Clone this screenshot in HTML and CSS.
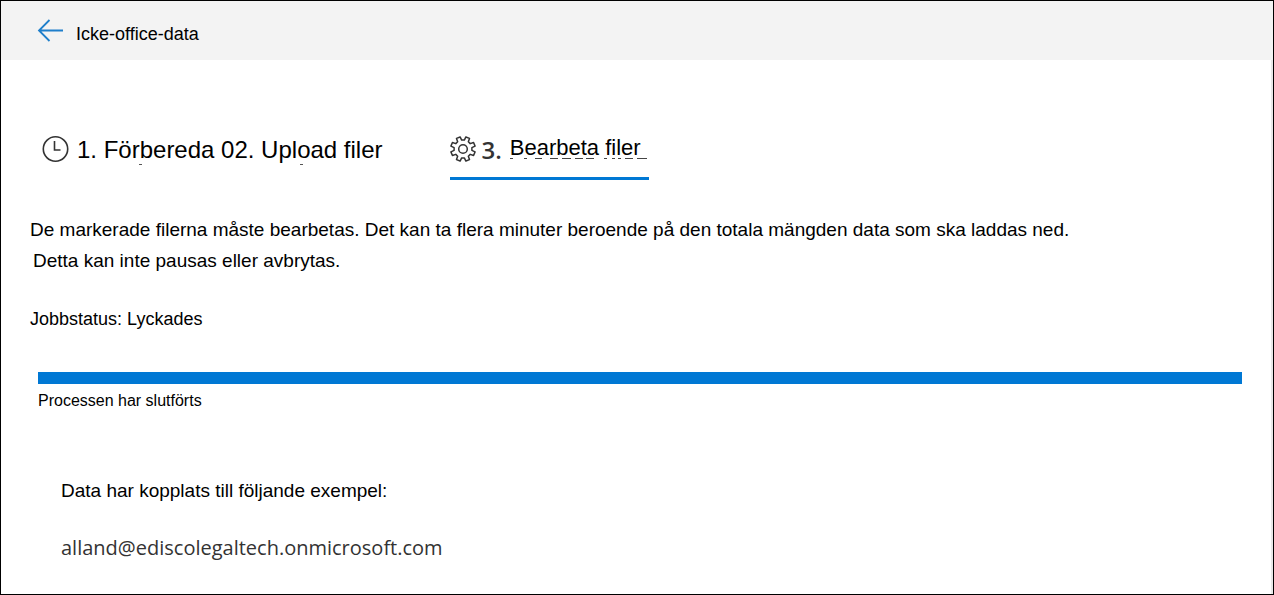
FILE: index.html
```html
<!DOCTYPE html>
<html lang="sv">
<head>
<meta charset="utf-8">
<meta name="viewport" content="width=device-width, initial-scale=1">
<title>Icke-office-data</title>
<link rel="stylesheet" href="styles.css">
</head>
<body>
<div class="page">
  <header class="header">
    <button class="back" type="button" aria-label="Tillbaka">
      <svg width="26" height="24" viewBox="0 0 26 24" fill="none" stroke="#1f7fcb" stroke-width="1.800"><path d="M26 11.500H2M12.500 1L2 11.500l10.500 10.500"/></svg>
    </button>
    <h1 class="title">Icke-office-data</h1>
  </header>
  <main class="main">
    <nav class="steps">
      <button class="step" type="button">
        <svg class="icon" width="28" height="28" viewBox="0 0 28 28" fill="none" stroke="#333" stroke-width="1.600"><circle cx="14.500" cy="13" r="12.200"/><path d="M13.500 5v9h6"/></svg>
        <span class="step-label">1. Förbereda 02. Upload filer
          <svg class="specks" width="300" height="2" viewBox="0 0 300 2" fill="#555"><path d="M62 0h3v1h-3zM223 0h3v1h-3z"/></svg>
        </span>
      </button>
      <button class="step step-active" type="button" aria-current="step">
        <svg class="icon" width="26" height="28" viewBox="-13 -13 26 28" fill="none" stroke="#333" stroke-width="1.500" stroke-linejoin="round"><path id="gear" d=""/><circle r="4.300"/></svg>
        <span class="step-number">3.</span>
        <span class="step-name">Bearbeta filer
          <svg class="dashes" width="138" height="2" viewBox="0 0 138 2" fill="#444"><path d="M0 0h3v1h-3zM14 0h3v1h-3zM25 0h7v1h-7zM40 0h8v1h-8zM52 0h9v1h-9zM65 0h8v1h-8zM76 0h8v1h-8zM94 0h3v1h-3zM102 0h3v1h-3zM108 0h3v1h-3zM115 0h8v1h-8zM127 0h10v1h-10z"/></svg>
        </span>
      </button>
    </nav>
    <section class="intro">
      <p class="text">De markerade filerna måste bearbetas. Det kan ta flera minuter beroende på den totala mängden data som ska laddas ned.</p>
      <p class="text text-next">Detta kan inte pausas eller avbrytas.</p>
    </section>
    <p class="status">Jobbstatus: Lyckades</p>
    <section class="progress">
      <div class="bar" role="progressbar" aria-label="Bearbetning" aria-valuenow="100" aria-valuemin="0" aria-valuemax="100"></div>
      <p class="progress-text">Processen har slutförts</p>
    </section>
    <section class="result">
      <p class="text">Data har kopplats till följande exempel:</p>
      <p class="account">alland@ediscolegaltech.onmicrosoft.com</p>
    </section>
  </main>
</div>
<script src="gear.js"></script>
</body>
</html>
```

FILE: gear.js
```js
// Outline of an eight-toothed gear, centred on the origin.
const polar = (radius, degrees) => {
  const a = (degrees * Math.PI) / 180;
  return (radius * Math.cos(a)).toFixed(2) + " " + (radius * Math.sin(a)).toFixed(2);
};
const points = [];
for (let i = 0; i < 8; i++) {
  const c = i * 45 + 22.5;
  points.push(polar(9, c - 14), polar(12.4, c - 9), polar(12.4, c + 9), polar(9, c + 14));
}
document.getElementById("gear").setAttribute("d", "M" + points.join("L") + "Z");
```

FILE: styles.css
```css
* {
  box-sizing: border-box;
}

body {
  margin: 0;
  background: #fff;
  color: #000;
  font-family: "Liberation Sans", Arial, sans-serif;
}

h1,
p {
  margin: 0;
  font-weight: 400;
}

button {
  padding: 0;
  border: 0;
  background: none;
  color: inherit;
  font: inherit;
}

svg {
  display: block;
}

.page {
  display: flex;
  flex-direction: column;
  min-height: 100vh;
  border: 1px solid #000;
}

.header {
  display: flex;
  align-items: center;
  gap: 13px;
  height: 59px;
  padding-left: 36px;
  background: #f3f3f3;
}

.title {
  padding-top: 6px;
  font-size: 18px;
  line-height: 24px;
}

.main {
  flex: 1;
  padding: 72px 29px 24px;
  border-right: 2px solid #e8e8e8;
}

.steps {
  display: flex;
  align-items: flex-start;
  gap: 67px;
  padding-left: 11px;
}

.step {
  display: flex;
  align-items: center;
  height: 48px;
  padding-bottom: 12px;
  gap: 8px;
  font-size: 24px;
  line-height: 32px;
  text-align: left;
  white-space: nowrap;
}

.step-active {
  gap: 6px;
  border-bottom: 3px solid #0078d4;
  padding-bottom: 9px;
}

.step-label,
.step-name {
  position: relative;
}

.specks {
  position: absolute;
  left: 0;
  top: 30px;
}

.step-number {
  color: #333;
  font-family: "Open Sans", "Noto Sans", sans-serif;
  font-weight: 600;
}

.step-name {
  width: 141px;
  font-size: 22px;
  padding: 0 0 4px 2px;
}

.dashes {
  position: absolute;
  left: 2px;
  top: 26px;
}

.intro {
  margin-top: 34px;
}

.text {
  font-size: 19px;
  line-height: 31px;
}

.text-next {
  padding-left: 3px;
}

.status {
  margin-top: 31px;
  font-size: 18px;
  line-height: 24px;
}

.progress {
  margin-top: 41px;
  padding-left: 8px;
}

.bar {
  height: 12px;
  background: #0078d4;
}

.progress-text {
  margin-top: 5px;
  font-size: 16px;
  line-height: 24px;
}

.result {
  margin-top: 62px;
  padding-left: 31px;
}

.account {
  margin-top: 26px;
  color: #333;
  font-family: "Open Sans", "Noto Sans", sans-serif;
  font-size: 20px;
  line-height: 31px;
}
```
